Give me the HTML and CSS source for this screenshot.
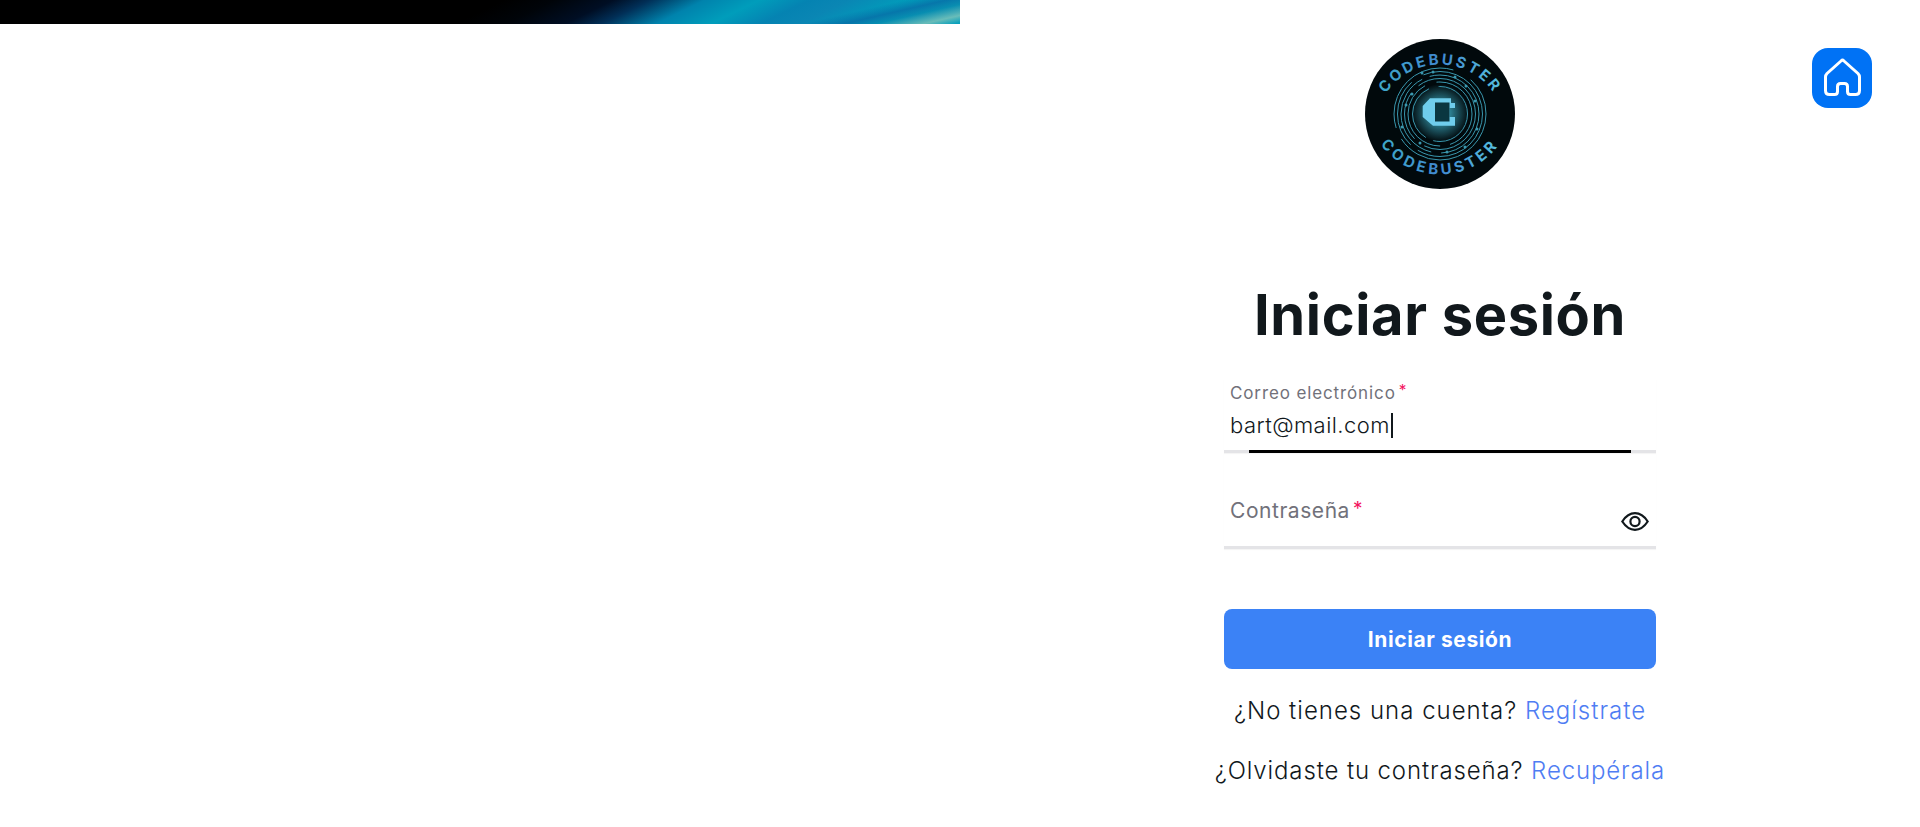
FILE: index.html
```html
<!DOCTYPE html>
<html lang="es">
<head>
<meta charset="utf-8">
<title>Iniciar sesión</title>
<link rel="stylesheet" href="styles.css">
</head>
<body>
<div class="page">
  <div class="left"><div class="banner"></div></div>
  <main class="right">
    <a class="home" href="#" aria-label="Inicio">
      <svg width="60" height="60" viewBox="0 0 60 60"><path class="home-line" d="M30.5 12 Q31 12 32 13 L46 25.5 Q47.5 27 47.5 29 V42.5 Q47.5 46.5 43.5 46.5 H38.5 Q35.5 46.5 35.5 43.5 V38.5 Q35.5 35.5 32.5 35.5 H28.5 Q25.5 35.5 25.5 38.5 V43.5 Q25.5 46.5 22.5 46.5 H17.5 Q13.5 46.5 13.5 42.5 V29 Q13.5 27 15 25.5 L29 13 Q30 12 30.5 12 Z"/></svg>
    </a>
    <svg class="logo" width="150" height="150" viewBox="0 0 150 150">
      <defs>
        <path id="arc-top" d="M14 113 A65 65 0 1 1 136 113"/>
        <path id="arc-bottom" d="M4 81 A73.5 73.5 0 0 0 146 81"/>
        <radialGradient id="glow"><stop offset="0.35" stop-color="#3fb4cc" stop-opacity="0.7"/><stop offset="1" stop-color="#3fb4cc" stop-opacity="0"/></radialGradient>
        <linearGradient id="word" x1="0" x2="1" y1="0" y2="0"><stop offset="0" stop-color="#3fabc8"/><stop offset="0.5" stop-color="#4088d0"/><stop offset="1" stop-color="#58c4df"/></linearGradient>
      </defs>
      <circle cx="75" cy="75" r="75" fill="#01090c"/>
      <circle cx="75" cy="74" r="29" fill="url(#glow)"/>
      <g class="rings">
        <circle cx="75" cy="75" r="46" stroke-dasharray="118 12 100 20 39 0"/>
        <circle cx="75" cy="75" r="42.5" stroke-dasharray="90 9 70 14 84 0"/>
        <circle cx="75" cy="75" r="39" stroke-dasharray="60 10 95 8 72 0"/>
        <circle cx="75" cy="75" r="35.5" stroke-dasharray="72 12 50 10 79 0"/>
        <circle cx="75" cy="75" r="32" stroke-dasharray="40 10 85 12 54 0"/>
        <circle cx="75" cy="75" r="27.5" stroke-dasharray="50 8 60 10 45 0"/>
      </g>
      <g class="nodes">
        <circle cx="57" cy="34" r="1.5"/><circle cx="68" cy="33" r="1.5"/><circle cx="90" cy="38" r="1.5"/><circle cx="101" cy="47" r="1.5"/><circle cx="110" cy="62" r="1.5"/><circle cx="112" cy="90" r="1.5"/><circle cx="100" cy="108" r="1.5"/><circle cx="82" cy="113" r="1.5"/><circle cx="55" cy="104" r="1.5"/><circle cx="37" cy="88" r="1.5"/><circle cx="41" cy="66" r="1.5"/><circle cx="47" cy="55" r="1.5"/>
      </g>
      <path class="chip" d="M65 59.3 H86 V64 H90 V69 H84.5 V78 H90 V86.7 H68 L57.7 78 V67 Z"/>
      <rect class="chip-slot" x="70" y="63.5" width="14.5" height="19"/>
      <text class="word" fill="url(#word)"><textPath href="#arc-top" startOffset="50%">CODEBUSTER</textPath></text>
      <text class="word word-low" fill="url(#word)"><textPath href="#arc-bottom" startOffset="50%">CODEBUSTER</textPath></text>
    </svg>
    <h1 class="title">Iniciar sesión</h1>
    <form class="form">
      <div class="field field-email">
        <div class="label-small">Correo electrónico<span class="req">*</span></div>
        <div class="value">bart@mail.com<span class="caret"></span></div>
      </div>
      <div class="field field-pass">
        <div class="label-big">Contraseña<span class="req">*</span></div>
        <svg class="eye" width="28" height="19" viewBox="0 0 28 19"><path d="M1.3 9.5 C5 3.8 9.2 1.2 14 1.2 S23 3.8 26.7 9.5 C23 15.2 18.8 17.8 14 17.8 S5 15.2 1.3 9.5 Z"/><circle cx="14" cy="9.5" r="4.6"/></svg>
      </div>
      <button class="submit" type="button">Iniciar sesión</button>
    </form>
    <p class="hint hint-first">¿No tienes una cuenta? <a href="#">Regístrate</a></p>
    <p class="hint hint-second">¿Olvidaste tu contraseña? <a href="#">Recupérala</a></p>
  </main>
</div>
</body>
</html>
```
FILE: styles.css
```css
* { box-sizing: border-box; }
html, body { margin: 0; padding: 0; background: #fff; }
body { font-family: Inter, "Liberation Sans", sans-serif; color: #11181c; }
.page { display: grid; grid-template-columns: 960px 960px; height: 827px; overflow: hidden; }
.left { min-width: 0; }
.banner {
  height: 24px;
  background:
    linear-gradient(167deg, rgba(8,110,165,0) 85%, rgba(8,105,165,.75) 89%, rgba(10,130,170,.6) 92%, rgba(110,190,185,.95) 96.5%, rgba(120,190,185,0) 99.5%),
    linear-gradient(154deg, #000 221px, #000409 243px, #000e24 269px, #012f57 285px, #0083ad 309px, #009dbb 333px, #0583b2 355px, #0a86b4 372px, #009ebb 401px, #0aa0bc 442px);
}
.right { position: relative; display: flex; flex-direction: column; align-items: center; padding-top: 39px; }
.home { position: absolute; top: 48px; left: 852px; width: 60px; height: 60px; border-radius: 16px; background: #0072f5; display: block; }
.home svg { display: block; }
.home-line { fill: none; stroke: #fff; stroke-width: 3; stroke-linejoin: round; }
.logo { display: block; flex: none; }
.rings circle { fill: none; stroke: #3a97ae; stroke-width: 1; }
.nodes circle { fill: #3a97ae; }
.chip { fill: #6fcdec; }
.chip-slot { fill: #0a3640; }
.word { font-family: Inter, "Liberation Sans", sans-serif; font-weight: 700; font-size: 15px; letter-spacing: 2.6px; text-anchor: middle; }
.word-low { letter-spacing: 3.6px; }
.title { margin: 92px 0 0; font-size: 56px; line-height: 68px; font-weight: 700; letter-spacing: .65px; color: #11181c; text-align: center; }
.form { width: 432px; margin-top: 30px; display: flex; flex-direction: column; }
.field { position: relative; border-bottom: 3px solid #e4e4e7; box-shadow: 0 1px 1px rgba(0,0,0,.04); padding: 0 6px; }
.field-email { height: 74px; padding-top: 4px; }
.field-email::after { content: ""; position: absolute; left: 25px; right: 25px; bottom: -3px; height: 3px; background: #000; }
.label-small { font-size: 17px; line-height: 20px; color: #71717a; white-space: nowrap; letter-spacing: .88px; }
.value { margin-top: 7px; font-size: 22px; line-height: 30px; color: #11181c; white-space: nowrap; display: flex; align-items: center; letter-spacing: .45px; font-weight: 350; }
.caret { display: inline-block; width: 2px; height: 25px; background: #11181c; margin-left: 1px; }
.field-pass { height: 96px; padding-top: 43px; display: flex; justify-content: space-between; align-items: flex-start; }
.label-big { font-size: 21px; line-height: 30px; color: #71717a; white-space: nowrap; letter-spacing: .55px; }
.req { color: #f31260; margin-left: 3px; font-size: .9em; vertical-align: 3px; line-height: 0; }
.eye { margin: 16px 1px 0 0; flex: none; }
.eye path, .eye circle { fill: none; stroke: #11181c; stroke-width: 2.2; }
.submit { margin-top: 60px; height: 60px; border: 0; border-radius: 8px; background: #3b82f6; color: #fff; font: 700 21px/1 Inter, "Liberation Sans", sans-serif; letter-spacing: .6px; cursor: pointer; }
.hint { margin: 0; font-size: 24px; line-height: 32px; color: #11181c; text-align: center; white-space: nowrap; font-weight: 350; }
.hint a { color: #4f7df3; text-decoration: none; }
.hint-first { margin-top: 26px; letter-spacing: 1px; }
.hint-second { margin-top: 28px; letter-spacing: .87px; }
```
